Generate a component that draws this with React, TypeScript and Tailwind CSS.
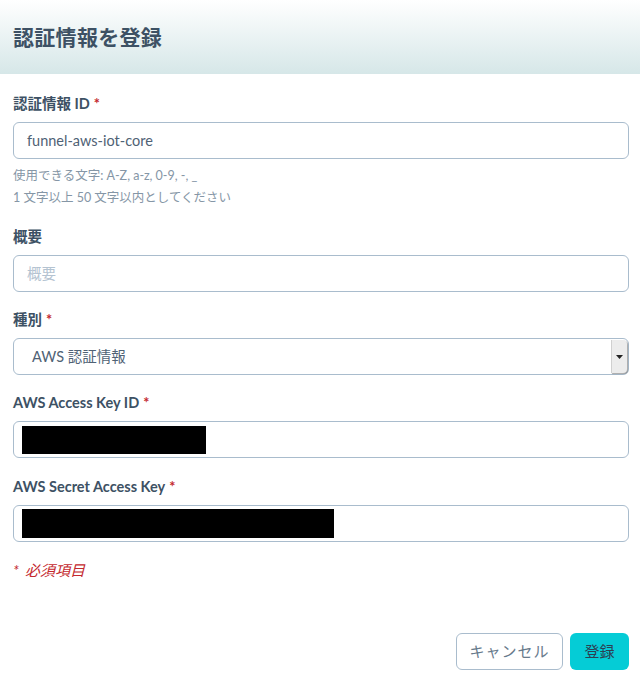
import React from "react";

const font = { fontFamily: '"Lato", "Noto Sans CJK JP", sans-serif' };

function Label({ text, req }: { text: string; req?: boolean }) {
  return (
    <div className="text-[14.5px] leading-[18px] font-bold text-[#3d5164] mb-[9px]">
      {text}
      {req && <span className="text-[#c4282e] ml-[4px]">*</span>}
    </div>
  );
}

function Input({ children }: { children?: React.ReactNode }) {
  return (
    <div className="h-[37px] rounded-[6px] border border-[#a9bccd] bg-white flex items-center px-[13px] text-[14.5px] text-[#4f6275]">
      {children}
    </div>
  );
}

export default function App() {
  return (
    <div style={font} className="w-[640px] h-[680px] bg-white relative overflow-hidden">
      <div className="h-[74px] bg-gradient-to-b from-white to-[#d6e7e8] flex items-center px-[13px]">
        <h1 className="text-[21px] font-bold text-[#3d5164] tracking-[0.3px]">認証情報を登録</h1>
      </div>
      <div className="px-[13px] pr-[11px] pt-[21px]">
        <Label text="認証情報 ID" req />
        <Input>funnel-aws-iot-core</Input>
        <div className="mt-[6px] text-[12.5px] leading-[22px] text-[#8596a6]">
          <div>使用できる文字: A-Z, a-z, 0-9, -, _</div>
          <div>1 文字以上 50 文字以内としてください</div>
        </div>

        <div className="mt-[19px]">
          <Label text="概要" />
          <Input>
            <span className="text-[#b4c3d1]">概要</span>
          </Input>
        </div>

        <div className="mt-[19px]">
          <Label text="種別" req />
          <div className="h-[37px] rounded-[6px] border border-[#a9bccd] bg-white flex items-stretch text-[14.5px] text-[#4f6275]">
            <div className="flex-1 flex items-center pl-[18px]">AWS 認証情報</div>
            <div className="w-[16px] my-[1px] mr-[1px] bg-[#ececec] border-l border-[#d0d0d0] shadow-[1px_1px_1px_rgba(0,0,0,0.35)] rounded-r-[4px] flex items-center justify-center">
              <svg width="7" height="4" viewBox="0 0 7 4">
                <path d="M0 0 L7 0 L3.5 4 Z" fill="#222" />
              </svg>
            </div>
          </div>
        </div>

        <div className="mt-[19px]">
          <Label text="AWS Access Key ID" req />
          <div className="h-[37px] rounded-[6px] border border-[#a9bccd] bg-white flex items-center px-[8px]">
            <div className="w-[184px] h-[28px] bg-black" />
          </div>
        </div>

        <div className="mt-[20px]">
          <Label text="AWS Secret Access Key" req />
          <div className="h-[37px] rounded-[6px] border border-[#a9bccd] bg-white flex items-center px-[8px]">
            <div className="w-[312px] h-[29px] bg-black" />
          </div>
        </div>

        <div className="mt-[19px] text-[15px] leading-[18px] italic text-[#c4282e]">
          <span className="mr-[6px]">*</span>必須項目
        </div>

        <div className="mt-[54px] flex justify-end gap-[7px]">
          <button className="h-[37px] w-[107px] rounded-[6px] border border-[#a9bccd] bg-white text-[15px] text-[#677a8c] tracking-[1px]">
            キャンセル
          </button>
          <button className="h-[37px] w-[59px] rounded-[6px] bg-[#05ccd6] text-[15px] text-[#2c4052]">
            登録
          </button>
        </div>
      </div>
    </div>
  );
}
